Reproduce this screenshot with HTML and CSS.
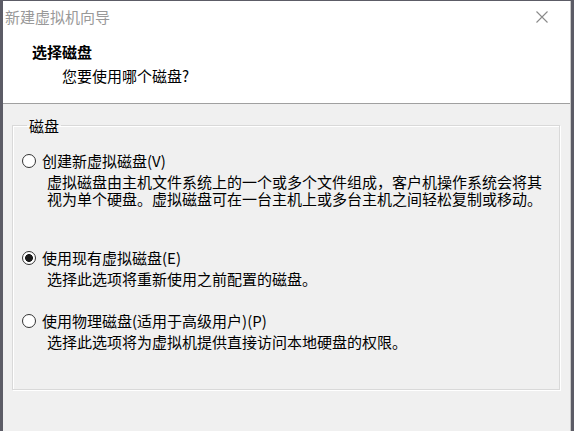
FILE: index.html
```html
<!DOCTYPE html>
<html lang="zh-CN">
<head>
  <meta charset="UTF-8">
  <meta name="viewport" content="width=device-width, initial-scale=1.0">
  <title>新建虚拟机向导</title>
  <link rel="stylesheet" href="styles.css">
</head>
<body>
  <div class="window">
    <div class="header">
      <div class="titlebar">
        <span class="title">新建虚拟机向导</span>
        <button class="close-btn" aria-label="关闭">
          <svg width="12" height="12" viewBox="0 0 12 12">
            <path d="M0.5 0.5 L11.5 11.5 M11.5 0.5 L0.5 11.5" stroke="#8a8a8a" stroke-width="1.1" fill="none"/>
          </svg>
        </button>
      </div>
      <h1 class="heading">选择磁盘</h1>
      <p class="subheading">您要使用哪个磁盘?</p>
    </div>

    <div class="content">
      <fieldset class="group">
        <legend>磁盘</legend>

        <div class="options">
          <div class="option">
            <label class="option-label">
              <input type="radio" name="disk" value="new">
              <span>创建新虚拟磁盘(V)</span>
            </label>
            <p class="desc desc-tall">虚拟磁盘由主机文件系统上的一个或多个文件组成，客户机操作系统会将其视为单个硬盘。虚拟磁盘可在一台主机上或多台主机之间轻松复制或移动。</p>
          </div>

          <div class="option">
            <label class="option-label">
              <input type="radio" name="disk" value="existing" checked>
              <span>使用现有虚拟磁盘(E)</span>
            </label>
            <p class="desc">选择此选项将重新使用之前配置的磁盘。</p>
          </div>

          <div class="option">
            <label class="option-label">
              <input type="radio" name="disk" value="physical">
              <span>使用物理磁盘(适用于高级用户)(P)</span>
            </label>
            <p class="desc">选择此选项将为虚拟机提供直接访问本地硬盘的权限。</p>
          </div>
        </div>
      </fieldset>
    </div>
  </div>
</body>
</html>
```

FILE: styles.css
```css
* {
  box-sizing: border-box;
}
body {
  margin: 0;
  height: 431px;
  overflow: hidden;
  background-color: #5c5c66;
  font-family: "Noto Sans CJK SC", "Microsoft YaHei", sans-serif;
  font-size: 15px;
  line-height: 17px;
  color: #000;
}
.window {
  margin: 1px 0 0 3px;
  width: 568px;
  height: 430px;
  background-color: #f0f0f0;
  border-right: 1px solid #c8c8c8;
}
.header {
  height: 103px;
  background-color: #fff;
  border-bottom: 1px solid #a0a0a0;
}
.titlebar {
  display: flex;
  justify-content: space-between;
  align-items: center;
  height: 31px;
  padding-left: 2px;
}
.title {
  color: #999;
}
.close-btn {
  display: flex;
  align-items: center;
  justify-content: center;
  width: 40px;
  height: 31px;
  padding: 0;
  margin-right: 8px;
  border: none;
  background: none;
}
.heading {
  margin: 11px 0 0 29px;
  font-size: 15px;
  line-height: 17px;
  font-weight: bold;
}
.subheading {
  margin: 7px 0 0 59px;
}
.content {
  padding: 13px 10px 0 9px;
}
.group {
  margin: 0;
  padding: 18px 0 39px 9px;
  border: 1px solid #d9d9d9;
  box-shadow: inset 1px 1px 0 #fff, 1px 1px 0 #fff;
}
.group legend {
  margin-left: 5px;
  padding: 0 2px;
}
.options {
  display: flex;
  flex-direction: column;
  gap: 25px;
}
.option-label {
  display: flex;
  align-items: center;
  gap: 6px;
}
.option-label input {
  appearance: none;
  -webkit-appearance: none;
  flex: none;
  width: 14px;
  height: 14px;
  margin: 0;
  border: 1px solid #333;
  border-radius: 50%;
  background-color: #fff;
}
.option-label input:checked {
  background: radial-gradient(circle, #1a1a1a 0 3.6px, #fff 4.2px);
}
.desc {
  margin: 4px 0 0 25px;
  padding-right: 12px;
}
.desc-tall {
  margin-bottom: 17px;
}
```
